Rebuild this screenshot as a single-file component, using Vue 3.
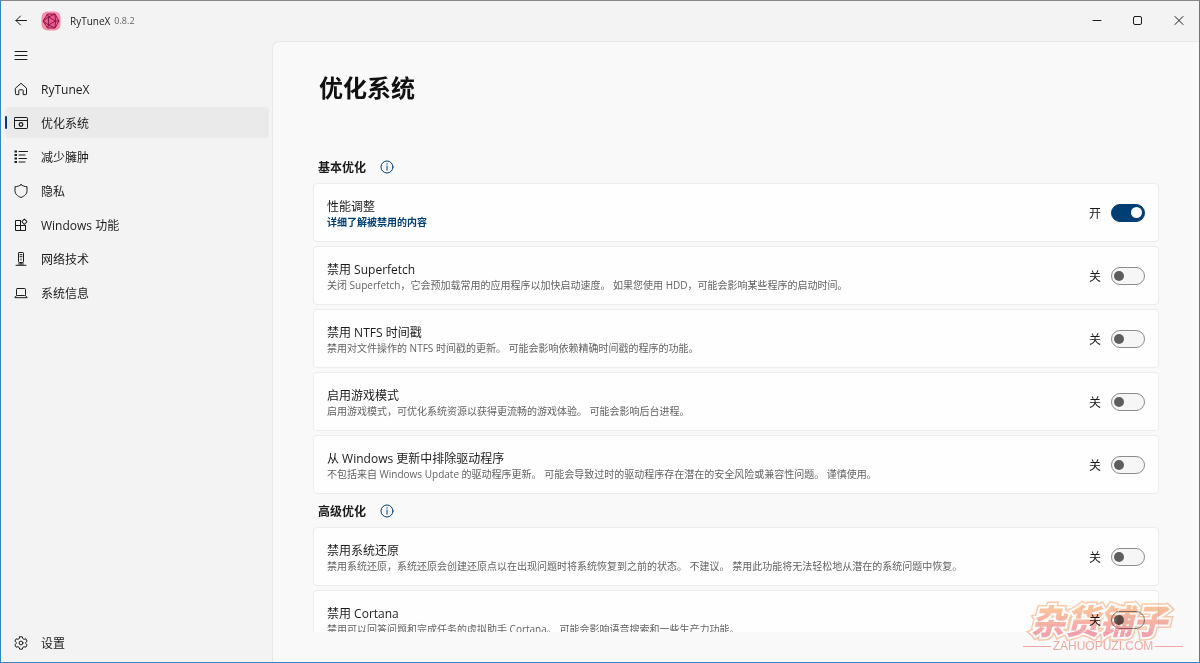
<script setup>
import { ref } from 'vue'

const navItems = [
  { id: 'home', label: 'RyTuneX' },
  { id: 'optimize', label: '优化系统' },
  { id: 'debloat', label: '减少臃肿' },
  { id: 'privacy', label: '隐私' },
  { id: 'features', label: 'Windows 功能' },
  { id: 'network', label: '网络技术' },
  { id: 'system', label: '系统信息' },
]
const current = ref('optimize')

const groups = ref([
  {
    title: '基本优化',
    items: [
      { id: 'perf', title: '性能调整', link: '详细了解被禁用的内容', on: true },
      { id: 'superfetch', title: '禁用 Superfetch', text: '关闭 Superfetch，它会预加载常用的应用程序以加快启动速度。 如果您使用 HDD，可能会影响某些程序的启动时间。', on: false },
      { id: 'ntfs', title: '禁用 NTFS 时间戳', text: '禁用对文件操作的 NTFS 时间戳的更新。 可能会影响依赖精确时间戳的程序的功能。', on: false },
      { id: 'game', title: '启用游戏模式', text: '启用游戏模式，可优化系统资源以获得更流畅的游戏体验。 可能会影响后台进程。', on: false },
      { id: 'drivers', title: '从 Windows 更新中排除驱动程序', text: '不包括来自 Windows Update 的驱动程序更新。 可能会导致过时的驱动程序存在潜在的安全风险或兼容性问题。 谨慎使用。', on: false },
    ],
  },
  {
    title: '高级优化',
    items: [
      { id: 'restore', title: '禁用系统还原', text: '禁用系统还原，系统还原会创建还原点以在出现问题时将系统恢复到之前的状态。 不建议。 禁用此功能将无法轻松地从潜在的系统问题中恢复。', on: false },
      { id: 'cortana', title: '禁用 Cortana', text: '禁用可以回答问题和完成任务的虚拟助手 Cortana。 可能会影响语音搜索和一些生产力功能。', on: false },
    ],
  },
])
</script>

<template>
  <div class="window">
    <header class="titlebar">
      <button class="icon-btn" aria-label="返回">
        <svg class="icon" viewBox="0 0 14 14"><path d="M12.500 6.500H2M6.500 2 2 6.500l4.500 4.500" /></svg>
      </button>
      <svg class="logo" viewBox="0 0 20 20" aria-hidden="true">
        <rect x="0.500" y="0.500" width="19" height="19" rx="6" fill="#f98aa8" />
        <g fill="none" stroke="#8a1a4c" stroke-width="1" stroke-linejoin="round">
          <path fill="#ee5a88" d="M6.500 3h7.500l4 7-4 7H6.500L2 10z" />
          <path d="M7.500 6v8l7-4z" />
          <path d="M6.500 3l1 3L14 3l.5 7 3.500 0M2 10l5.500-4M2 10l5.500 4-1 3M7.500 14l6.500 3 .5-7" />
        </g>
      </svg>
      <span class="app-name">RyTuneX</span>
      <span class="version">0.8.2</span>
      <div class="captions">
        <button class="caption" aria-label="最小化"><svg class="cap-icon" viewBox="0 0 12 12"><path d="M2 5.500h8" /></svg></button>
        <button class="caption" aria-label="最大化"><svg class="cap-icon" viewBox="0 0 12 12"><rect x="1.500" y="1.500" width="8" height="8" rx="1.500" /></svg></button>
        <button class="caption" aria-label="关闭"><svg class="cap-icon" viewBox="0 0 12 12"><path d="M2 1.500l8 8M10 1.500l-8 8" /></svg></button>
      </div>
    </header>

    <div class="body">
      <nav class="sidebar">
        <button class="icon-btn menu" aria-label="菜单">
          <svg class="icon" viewBox="0 0 14 14"><path d="M1 2.500h12M1 6.500h12M1 10.500h12" /></svg>
        </button>
        <button
          v-for="item in navItems"
          :key="item.id"
          class="nav-item"
          :class="{ active: item.id === current }"
          @click="current = item.id"
        >
          <svg class="icon" viewBox="0 0 14 14" aria-hidden="true">
            <path v-if="item.id === 'home'" d="M1.500 6.200 7 1.300l5.500 4.900V12a.6.6 0 0 1-.6.600H9.200V8.500a.7.7 0 0 0-.7-.7h-3a.7.7 0 0 0-.7.700v4.100H2.100a.6.6 0 0 1-.6-.600z" />
            <g v-else-if="item.id === 'optimize'">
              <rect x=".5" y="1.500" width="13" height="11" rx=".7" /><path d="M.5 4.500h13" /><circle cx="7" cy="8.500" r="1.800" stroke-width="1.300" />
            </g>
            <g v-else-if="item.id === 'debloat'">
              <path d="M5 1.500h8.500M5 5h6M5 8.500h7.500M5 12h6" />
              <path stroke-width="2.200" stroke-linecap="butt" d="M.5 1.500h2.500M.5 5h2.500M.5 8.500h2.500M.5 12h2.500" />
            </g>
            <path v-else-if="item.id === 'privacy'" d="M7 .7c1.700 1.300 3.700 1.900 6 2v4c0 3.200-2.200 5.300-6 6.800C3.200 12 1 9.900 1 6.700v-4c2.300-.1 4.300-.7 6-2z" />
            <g v-else-if="item.id === 'features'">
              <path d="M6.500 2.500H1.500v10h10V7.500M1.500 7.500h10M6.500 2.500v10" /><rect x="8.500" y="1.800" width="3.800" height="3.800" rx=".4" transform="rotate(45 10.400 3.700)" />
            </g>
            <g v-else-if="item.id === 'network'">
              <rect x="4.500" y=".5" width="5" height="10" rx=".7" /><path d="M6 2.700h2M6 4.700h2M7 7v1M7 10.500v1.500M2 13.300h10M4.500 12h5" />
            </g>
            <g v-else><rect x="2.500" y="2.500" width="9" height="7" rx=".8" /><path d="M2.500 9.500.8 11.700h12.400l-1.700-2.200" /></g>
          </svg>
          <span>{{ item.label }}</span>
        </button>
        <button class="nav-item settings">
          <svg class="icon" viewBox="0 0 14 14" aria-hidden="true">
            <path d="M5.700.8h2.600l.5 1.800 1.200.7 1.800-.5 1.300 2.300L11.800 6.400v1.200l1.300 1.300-1.300 2.300-1.800-.5-1.200.7-.5 1.800H5.700l-.5-1.800-1.200-.7-1.800.5L.9 8.900l1.300-1.300V6.400L.9 5.100l1.300-2.300 1.800.5 1.200-.7z" />
            <circle cx="7" cy="7" r="1.900" />
          </svg>
          <span>设置</span>
        </button>
      </nav>

      <main class="content">
        <h1>优化系统</h1>
        <div class="scroller">
          <section v-for="group in groups" :key="group.title">
            <div class="group-head">
              <h2>{{ group.title }}</h2>
              <button class="info" :aria-label="group.title + '说明'">
                <svg viewBox="0 0 14 14"><circle cx="7" cy="7" r="6" /><path d="M7 6v4.200M7 3.600v.6" /></svg>
              </button>
            </div>
            <div class="cards">
              <article v-for="item in group.items" :key="item.id" class="card">
                <div class="copy">
                  <label class="card-title" :for="item.id">{{ item.title }}</label>
                  <a v-if="item.link" href="#">{{ item.link }}</a>
                  <p v-else>{{ item.text }}</p>
                </div>
                <label class="state" :for="item.id">{{ item.on ? '开' : '关' }}</label>
                <input :id="item.id" v-model="item.on" class="switch" type="checkbox" role="switch" />
              </article>
            </div>
          </section>
        </div>
      </main>
    </div>

    <div class="watermark">
      <div class="mark-name" data-text="杂货铺子">杂货铺子</div>
      <div class="mark-site">ZAHUOPUZI.COM</div>
    </div>
  </div>
</template>

<style>
body {
  background: #f3f3f3;
}
</style>

<style scoped>
* {
  box-sizing: border-box;
}
.window {
  position: relative;
  display: flex;
  flex-direction: column;
  height: 100vh;
  border: 1px solid #3785c3;
  border-top-color: #89868a;
  background: #f3f3f3;
  color: #1b1b1b;
  font: 12px/16px "Open Sans", "Noto Sans CJK SC", sans-serif;
  overflow: hidden;
}
button {
  padding: 0;
  border: 0;
  background: none;
  color: inherit;
  font: inherit;
}
.icon {
  flex: none;
  width: 14px;
  height: 14px;
}
.icon,
.cap-icon,
.info svg {
  display: block;
  fill: none;
  stroke: currentColor;
  stroke-width: 1;
  stroke-linecap: round;
  stroke-linejoin: round;
}
.titlebar {
  display: flex;
  flex: none;
  align-items: center;
  height: 40px;
}
.icon-btn {
  display: flex;
  flex: none;
  align-items: center;
  width: 40px;
  padding-left: 13px;
}
.logo {
  width: 20px;
  height: 20px;
}
.app-name {
  margin-left: 9px;
  font-size: 10px;
}
.version {
  margin-left: 4px;
  color: #666;
  font-size: 9px;
}
.captions {
  display: flex;
  align-self: stretch;
  margin-left: auto;
}
.caption {
  display: grid;
  place-items: center;
  width: 41px;
}
.cap-icon {
  width: 12px;
  height: 12px;
}
.body {
  display: flex;
  flex: 1;
  min-height: 0;
}
.sidebar {
  display: flex;
  flex: none;
  flex-direction: column;
  gap: 3px;
  width: 271px;
  padding: 0 3px 4px 4px;
}
.menu {
  height: 29px;
  padding-left: 9px;
}
.nav-item {
  position: relative;
  display: flex;
  flex: none;
  align-items: center;
  gap: 13px;
  height: 31px;
  padding-left: 9px;
  border-radius: 4px;
  text-align: left;
}
.nav-item span {
  padding-top: 3px;
}
.nav-item.active {
  background: #eaeaea;
}
.nav-item.active::before {
  content: "";
  position: absolute;
  left: 0;
  width: 2px;
  height: 13px;
  border-radius: 1px;
  background: #003e73;
}
.settings {
  margin-top: auto;
}
.content {
  display: flex;
  flex: 1;
  flex-direction: column;
  min-width: 0;
  padding: 29px 40px 30px;
  border: 1px solid #e8e8e8;
  border-width: 1px 0 0 1px;
  border-radius: 7px 0 0 0;
  background: #f9f9f9;
}
h1 {
  margin: 0 0 45px 6px;
  color: #111;
  font-size: 24px;
  line-height: 34px;
}
.scroller {
  flex: 1;
  min-height: 0;
  overflow: hidden;
}
.group-head {
  display: flex;
  align-items: center;
  gap: 14px;
  height: 33px;
  padding-left: 5px;
}
h2 {
  margin: 0;
  padding-top: 3px;
  font-size: 12px;
  line-height: 16px;
}
.info {
  color: #003e73;
}
.info svg {
  width: 14px;
  height: 14px;
}
.cards {
  display: flex;
  flex-direction: column;
  gap: 4px;
}
.card {
  display: flex;
  align-items: center;
  height: 59px;
  padding: 0 13px;
  border: 1px solid #ececec;
  border-radius: 4px;
  background: #fefefe;
}
.copy {
  display: flex;
  flex: 1;
  flex-direction: column;
  min-width: 0;
  padding-top: 2px;
}
.copy p,
.copy a {
  margin: 0;
  color: #636363;
  font-size: 10px;
  line-height: 14px;
}
.copy a {
  color: #003e73;
  font-weight: 700;
  text-decoration: none;
}
.state {
  margin-right: 10px;
  padding-top: 3px;
}
.switch {
  appearance: none;
  display: flex;
  align-items: center;
  width: 34px;
  height: 18px;
  margin: 0;
  padding: 0 2px;
  border: 1px solid #8c8c8c;
  border-radius: 9px;
  background: #f6f6f6;
}
.switch::before {
  content: "";
  width: 10px;
  height: 10px;
  border-radius: 50%;
  background: #5e5e5e;
}
.switch:checked {
  justify-content: flex-end;
  border-color: #003e73;
  background: #003e73;
}
.switch:checked::before {
  width: 11px;
  height: 11px;
  background: #fff;
}
.watermark {
  position: absolute;
  right: 16px;
  bottom: 9px;
  width: 160px;
  opacity: 0.6;
  mix-blend-mode: multiply;
  text-align: center;
  pointer-events: none;
}
.mark-name {
  position: relative;
  padding-right: 8px;
  color: #f7a873;
  font: italic 900 34px/38px "Noto Sans CJK SC", sans-serif;
  -webkit-text-stroke: 7px #f7a873;
  paint-order: stroke;
}
.mark-name::before,
.mark-name::after {
  position: absolute;
  inset: 0 8px 0 0;
  content: attr(data-text);
}
.mark-name::before {
  color: #fff;
  -webkit-text-stroke: 4px #fff;
}
.mark-name::after {
  background: linear-gradient(#f79a5c 25%, #f0697a 85%);
  background-clip: text;
  color: transparent;
  -webkit-text-stroke: 0;
}
.mark-site {
  display: flex;
  align-items: center;
  gap: 2px;
  color: #ee7468;
  font: 12px/14px "Liberation Sans", sans-serif;
  -webkit-text-stroke: 0;
}
.mark-site::before,
.mark-site::after {
  content: "";
  flex: 1;
  height: 1px;
  background: #ee7468;
}
</style>
